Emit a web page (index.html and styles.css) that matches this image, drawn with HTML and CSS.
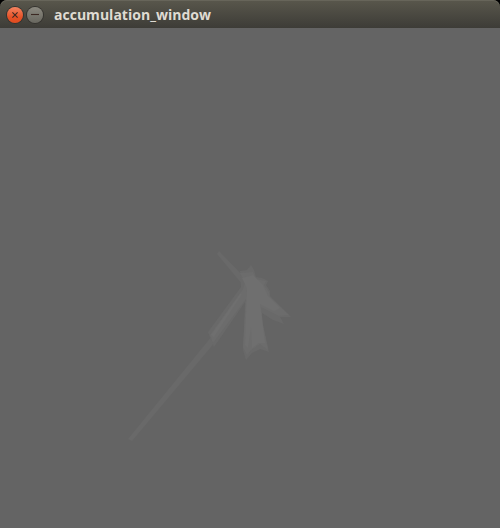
FILE: index.html
```html
<!DOCTYPE html>
<html lang="en">
<head>
<meta charset="utf-8">
<title>accumulation_window</title>
<link rel="stylesheet" href="styles.css">
</head>
<body>
<main class="window">
  <header class="titlebar">
    <button class="control close" aria-label="Close"><svg viewBox="0 0 16 16"><path d="M5.4 5.4l5.2 5.2M10.6 5.4l-5.2 5.2"/></svg></button>
    <button class="control minimize" aria-label="Minimize"><svg viewBox="0 0 16 16"><path d="M4 7.5h8"/></svg></button>
    <h1 class="title"><svg width="158" height="26" viewBox="0 0 158 26"><text x="0" y="18" textLength="157" lengthAdjust="spacingAndGlyphs">accumulation_window</text></svg></h1>
  </header>
  <svg class="canvas" viewBox="0 28 500 500">
    <g class="faint">
      <path d="M219 251L246 279L242 284L217 254Z"/>
      <path d="M212 336L216 341L132 441L128 439Z"/>
      <path d="M240 271L247 270L251 265L254 270L256 277L262 278L268 281L266 285L270 291L270 296L291 317L280 317L284 324L273 320L262 313L262 320L269 352L260 349L252 353L246 360L243 350L245 302L214 347L208 332L241 287Z"/>
    </g>
    <g class="middle">
      <path d="M240 273L253 272L256 279L266 281L264 285L269 292L270 297L289 315L279 316L271 312L261 307L263 325L268 350L260 344L251 350L247 355L243 347L246 299L213 343L210 335L243 289L245 283Z"/>
    </g>
    <g class="bright">
      <path d="M242 278L253 275L263 285L268 296L280 308L274 311L260 304L265 343L259 343L252 348L251 327L248 348L245 345L247 288Z"/>
      <path d="M242 294L214 337L211 335L240 294Z"/>
    </g>
  </svg>
</main>
</body>
</html>
```
FILE: styles.css
```css
* { box-sizing: border-box; }
body { margin: 0; background: #000; }
.window { width: 500px; height: 528px; display: flex; flex-direction: column; }
.titlebar {
  height: 28px;
  display: flex;
  align-items: center;
  gap: 3px;
  padding: 1px 7px 0;
  border-radius: 7px 7px 0 0;
  background: linear-gradient(#59574c, #3d3c37);
  box-shadow: inset 0 1px #67655a;
}
.control {
  width: 16px;
  height: 16px;
  padding: 0;
  border: 0;
  border-radius: 50%;
  display: flex;
  box-shadow: 0 0 0 1px #34332f;
}
.control svg { width: 16px; height: 16px; fill: none; stroke: #3b2923; stroke-width: 1.1; }
.close { background: linear-gradient(#f48461, #e65126 65%, #df4c20); }
.minimize { background: linear-gradient(#8b8980, #68675f); }
.control + .control { margin-left: 1px; }
.title { margin: 0 0 0 8px; height: 26px; }
.title svg { display: block; }
.title text {
  font: 700 14px "Open Sans", "Noto Sans", sans-serif;
  fill: #dfdbd2;
}
.canvas { display: block; width: 500px; height: 500px; background: #646464; }
.faint { fill: #696969; }
.middle { fill: #6c6c6c; }
.bright { fill: #6f6f6f; }
```
